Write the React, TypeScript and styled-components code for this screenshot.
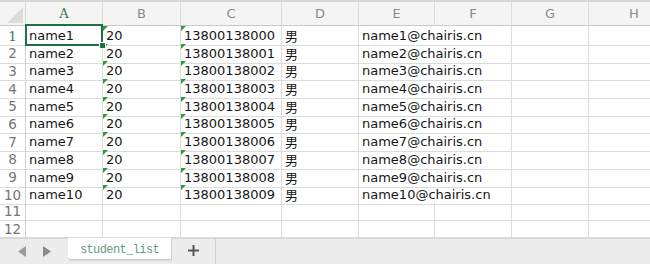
import React from 'react'
import styled, { createGlobalStyle } from 'styled-components'

const GlobalStyle = createGlobalStyle`
  body {
    margin: 0;
    background: #fff;
    font-family: 'DejaVu Sans', 'Noto Sans CJK SC', sans-serif;
  }
`

const columns = ['A', 'B', 'C', 'D', 'E', 'F', 'G', 'H']

const students = Array.from({ length: 10 }, (_, i) => ({
  name: `name${i + 1}`,
  age: '20',
  phone: `1380013800${i}`,
  sex: '男',
  email: `name${i + 1}@chairis.cn`,
}))

function App() {
  return (
    <Sheet>
      <GlobalStyle />
      <Grid>
        <HeaderRow>
          <Corner>
            <svg width="16" height="16" viewBox="0 0 16 16">
              <polygon points="16,0 16,16 0,16" fill="#dcdcdc" />
            </svg>
          </Corner>
          {columns.map((c) => (
            <ColHead key={c} active={c === 'A'}>
              {c}
            </ColHead>
          ))}
        </HeaderRow>

        {students.map((s, i) => (
          <Row key={s.name}>
            <RowHead active={i === 0}>{i + 1}</RowHead>
            <Cell selected={i === 0}>
              {s.name}
              {i === 0 && <Handle />}
            </Cell>
            <Cell flagged>{s.age}</Cell>
            <Cell flagged>{s.phone}</Cell>
            <Cell cjk>{s.sex}</Cell>
            <Cell span={2}>{s.email}</Cell>
            <Cell />
            <Cell />
          </Row>
        ))}

        {[11, 12].map((n) => (
          <Row key={n}>
            <RowHead>{n}</RowHead>
            {columns.map((c) => (
              <Cell key={c} />
            ))}
          </Row>
        ))}
      </Grid>

      <TabBar>
        <Arrows>
          <svg width="8" height="11" viewBox="0 0 8 11">
            <polygon points="8,0 8,11 0,5.5" fill="#9a9a9a" />
          </svg>
          <svg width="8" height="11" viewBox="0 0 8 11">
            <polygon points="0,0 0,11 8,5.5" fill="#8a8a8a" />
          </svg>
        </Arrows>
        <Tab>student_list</Tab>
        <AddButton>
          <svg width="11" height="11" viewBox="0 0 11 11">
            <path d="M5.5 0v11M0 5.5h11" stroke="#555" strokeWidth="2" />
          </svg>
        </AddButton>
        <Divider />
      </TabBar>
    </Sheet>
  )
}

const template = '26px 77px 78px 101px 77px 76px 77px 77px 1fr'

const Sheet = styled.div`
  width: 650px;
  height: 264px;
  display: flex;
  flex-direction: column;
  overflow: hidden;
`

const Grid = styled.div`
  display: flex;
  flex-direction: column;
  width: 680px;
`

const HeaderRow = styled.div`
  display: grid;
  grid-template-columns: ${template};
  height: 26px;
  box-sizing: border-box;
  border-top: 2px solid #d8d8d8;
  border-bottom: 1px solid #c9c9c9;
  background: #f4f4f4;
`

const Corner = styled.div`
  display: flex;
  align-items: flex-end;
  justify-content: flex-end;
  padding: 0 2px 2px 0;
  border-right: 1px solid #d9d9d9;
`

const ColHead = styled.div<{ active?: boolean }>`
  display: flex;
  align-items: center;
  justify-content: center;
  border-right: 1px solid #dcdcdc;
  font-size: 13px;
  color: ${(p) => (p.active ? '#2f7a4b' : '#8a8a8a')};
  font-family: ${(p) =>
    p.active ? "'DejaVu Serif', serif" : "'DejaVu Sans', sans-serif"};
`

const Row = styled.div`
  display: grid;
  grid-template-columns: ${template};
  height: 17.7px;
`

const RowHead = styled.div<{ active?: boolean }>`
  display: flex;
  align-items: center;
  justify-content: center;
  box-sizing: border-box;
  border-right: 1px solid #d2d2d2;
  border-bottom: 1px solid #dcdcdc;
  font-size: 13.5px;
  color: ${(p) => (p.active ? '#3c7d52' : '#757575')};
  font-family: ${(p) =>
    p.active ? "'DejaVu Serif', serif" : "'DejaVu Sans', sans-serif"};
`

const Cell = styled.div<{
  selected?: boolean
  flagged?: boolean
  cjk?: boolean
  span?: number
}>`
  position: relative;
  box-sizing: border-box;
  grid-column: span ${(p) => p.span || 1};
  display: flex;
  align-items: center;
  padding-left: 3px;
  border-right: 1px solid #dcdcdc;
  border-bottom: 1px solid #dcdcdc;
  font-size: 13px;
  font-family: ${(p) =>
    p.cjk
      ? "'Noto Sans CJK SC', sans-serif"
      : "'DejaVu Sans', 'Noto Sans CJK SC', sans-serif"};
  color: #161616;
  white-space: nowrap;
  overflow: visible;

  ${(p) =>
    p.selected &&
    `
    &::after {
      content: '';
      position: absolute;
      left: -1px;
      top: -2px;
      right: -1px;
      bottom: -1px;
      border: 2px solid #1f7144;
      pointer-events: none;
    }
  `}

  ${(p) =>
    p.flagged &&
    `
    &::before {
      content: '';
      position: absolute;
      left: 0;
      top: 0;
      border-top: 5px solid #2f9a3c;
      border-right: 5px solid transparent;
    }
  `}
`

const Handle = styled.span`
  position: absolute;
  right: -4px;
  bottom: -4px;
  width: 5px;
  height: 5px;
  background: #1f7144;
  border: 1px solid #fff;
  z-index: 2;
`

const TabBar = styled.div`
  flex: 1;
  display: flex;
  align-items: stretch;
  background: #ececec;
  border-top: 1px solid #d6d6d6;
`

const Arrows = styled.div`
  display: flex;
  align-items: center;
  gap: 17px;
  padding-left: 18px;
  width: 50px;
`

const Tab = styled.div`
  width: 104px;
  margin-top: -1px;
  height: 22px;
  box-sizing: border-box;
  background: #fff;
  border-right: 1px solid #d0d0d0;
  border-bottom: 1px solid #c8c8c8;
  border-bottom-left-radius: 3px;
  box-shadow: 0 1px 1px rgba(0, 0, 0, 0.08);
  display: flex;
  align-items: center;
  justify-content: center;
  padding-top: 3px;
  font-family: 'Liberation Mono', monospace;
  font-size: 12px;
  letter-spacing: -0.6px;
  color: #6a9a7f;
`

const AddButton = styled.div`
  width: 43px;
  display: flex;
  align-items: center;
  justify-content: center;
  padding-bottom: 2px;
`

const Divider = styled.div`
  width: 1px;
  background: #d2d2d2;
`

export default App
